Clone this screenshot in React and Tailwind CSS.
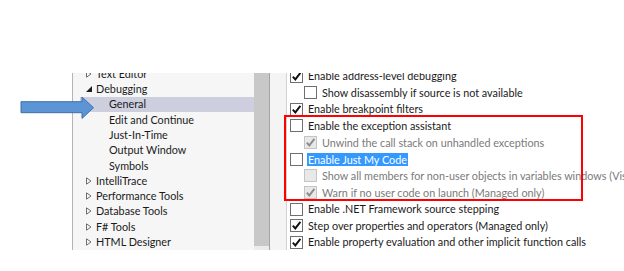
import React from 'react';

const tree = [
  { label: 'Text Editor', level: 0, exp: 'closed' },
  { label: 'Debugging', level: 0, exp: 'open' },
  { label: 'General', level: 1, selected: true },
  { label: 'Edit and Continue', level: 1 },
  { label: 'Just-In-Time', level: 1 },
  { label: 'Output Window', level: 1 },
  { label: 'Symbols', level: 1 },
  { label: 'IntelliTrace', level: 0, exp: 'closed' },
  { label: 'Performance Tools', level: 0, exp: 'closed' },
  { label: 'Database Tools', level: 0, exp: 'closed' },
  { label: 'F# Tools', level: 0, exp: 'closed' },
  { label: 'HTML Designer', level: 0, exp: 'closed' },
];

const options = [
  { label: 'Enable address-level debugging', checked: true },
  { label: 'Show disassembly if source is not available', sub: true },
  { label: 'Enable breakpoint filters', checked: true },
  { label: 'Enable the exception assistant' },
  { label: 'Unwind the call stack on unhandled exceptions', sub: true, checked: true, disabled: true },
  { label: 'Enable Just My Code', highlight: true },
  { label: 'Show all members for non-user objects in variables windows (Visual Basic only)', sub: true, disabled: true },
  { label: 'Warn if no user code on launch (Managed only)', sub: true, checked: true, disabled: true },
  { label: 'Enable .NET Framework source stepping' },
  { label: 'Step over properties and operators (Managed only)', checked: true },
  { label: 'Enable property evaluation and other implicit function calls', checked: true },
];

function Expander({ state }) {
  if (state === 'open') {
    return (
      <svg width="6" height="6" viewBox="0 0 6 6" className="shrink-0">
        <path d="M6 0 L6 6 L0 6 Z" fill="#1e1e1e" />
      </svg>
    );
  }
  return (
    <svg width="6" height="8" viewBox="0 0 6 8" className="shrink-0">
      <path d="M0.5 0.8 L5 4 L0.5 7.2 Z" fill="none" stroke="#6e6e6e" strokeWidth="1" />
    </svg>
  );
}

function Box({ checked, disabled }) {
  return (
    <span
      className={`flex h-[13px] w-[13px] shrink-0 items-center justify-center border ${
        disabled ? 'border-[#c4c4c4] bg-[#e8e8e8]' : 'border-[#6f6f6f] bg-white'
      }`}
    >
      {checked && (
        <svg width="11" height="11" viewBox="0 0 11 11">
          <path
            d="M1.8 5.6 L4.3 8.4 L9.4 1.8"
            fill="none"
            stroke={disabled ? '#8c8c8c' : '#111'}
            strokeWidth="1.9"
          />
        </svg>
      )}
    </span>
  );
}

export default function App() {
  return (
    <div className="relative h-[271px] w-[624px] overflow-hidden bg-white font-['Lato',sans-serif] text-[10.8px] text-[#1a1a1a]">
      <div className="mt-[73px] flex h-[177px]">
        <div className="w-[72px] shrink-0" />

        {/* options tree */}
        <div className="flex w-[197px] shrink-0 border-l border-[#b4b4b4] bg-[#f6f6f6]">
          <div className="flex-1 overflow-hidden">
            <div className="-mt-[6.6px]">
              {tree.map((t) => (
                <div
                  key={t.label}
                  className={`flex h-[15.27px] items-center ${
                    t.selected ? 'ml-[7px] bg-[#cdcfdf] pl-[29px]' : t.level ? 'pl-[36px]' : 'pl-[13px]'
                  }`}
                >
                  {t.exp && (
                    <span className="flex w-[10px] shrink-0 items-center">
                      <Expander state={t.exp} />
                    </span>
                  )}
                  <span className="whitespace-nowrap">{t.label}</span>
                </div>
              ))}
            </div>
          </div>
          <div className="flex w-[15px] shrink-0 flex-col bg-[#ececec] pb-[4px]">
            <div className="flex-1 bg-[#c8c8c8]" />
          </div>
        </div>

        {/* option page */}
        <div className="flex flex-1 border-l border-[#a4a4a4]">
          <div className="w-[17px] shrink-0 border-r border-[#d2d2d2] bg-[#f4f4f4]" />
          <div className="flex-1 overflow-hidden">
            <div className="-mt-[5.33px] pl-[3px]">
              {options.map((o) => (
                <div
                  key={o.label}
                  className={`flex h-[16.67px] items-center gap-[5px] whitespace-nowrap ${o.sub ? 'pl-[14px]' : ''}`}
                >
                  <Box checked={o.checked} disabled={o.disabled} />
                  <span
                    className={
                      o.highlight
                        ? '-ml-[1px] bg-[#3399ff] px-[1px] leading-[13px] text-white'
                        : o.disabled
                        ? 'text-[#7a7a7a]'
                        : ''
                    }
                  >
                    {o.label}
                  </span>
                </div>
              ))}
            </div>
          </div>
        </div>
      </div>

      {/* annotations */}
      <svg className="absolute left-[20px] top-[96px]" width="76" height="24" viewBox="0 0 76 24">
        <path
          d="M1 5.7 L62 5.7 L62 1 L73.5 11.7 L62 22.4 L62 16.7 L1 16.7 Z"
          fill="#5b95d6"
          stroke="#3f6fa8"
          strokeWidth="1"
        />
      </svg>
      <div className="absolute left-[284px] top-[115px] h-[86px] w-[299px] border-2 border-[#ff0000]" />
    </div>
  );
}
